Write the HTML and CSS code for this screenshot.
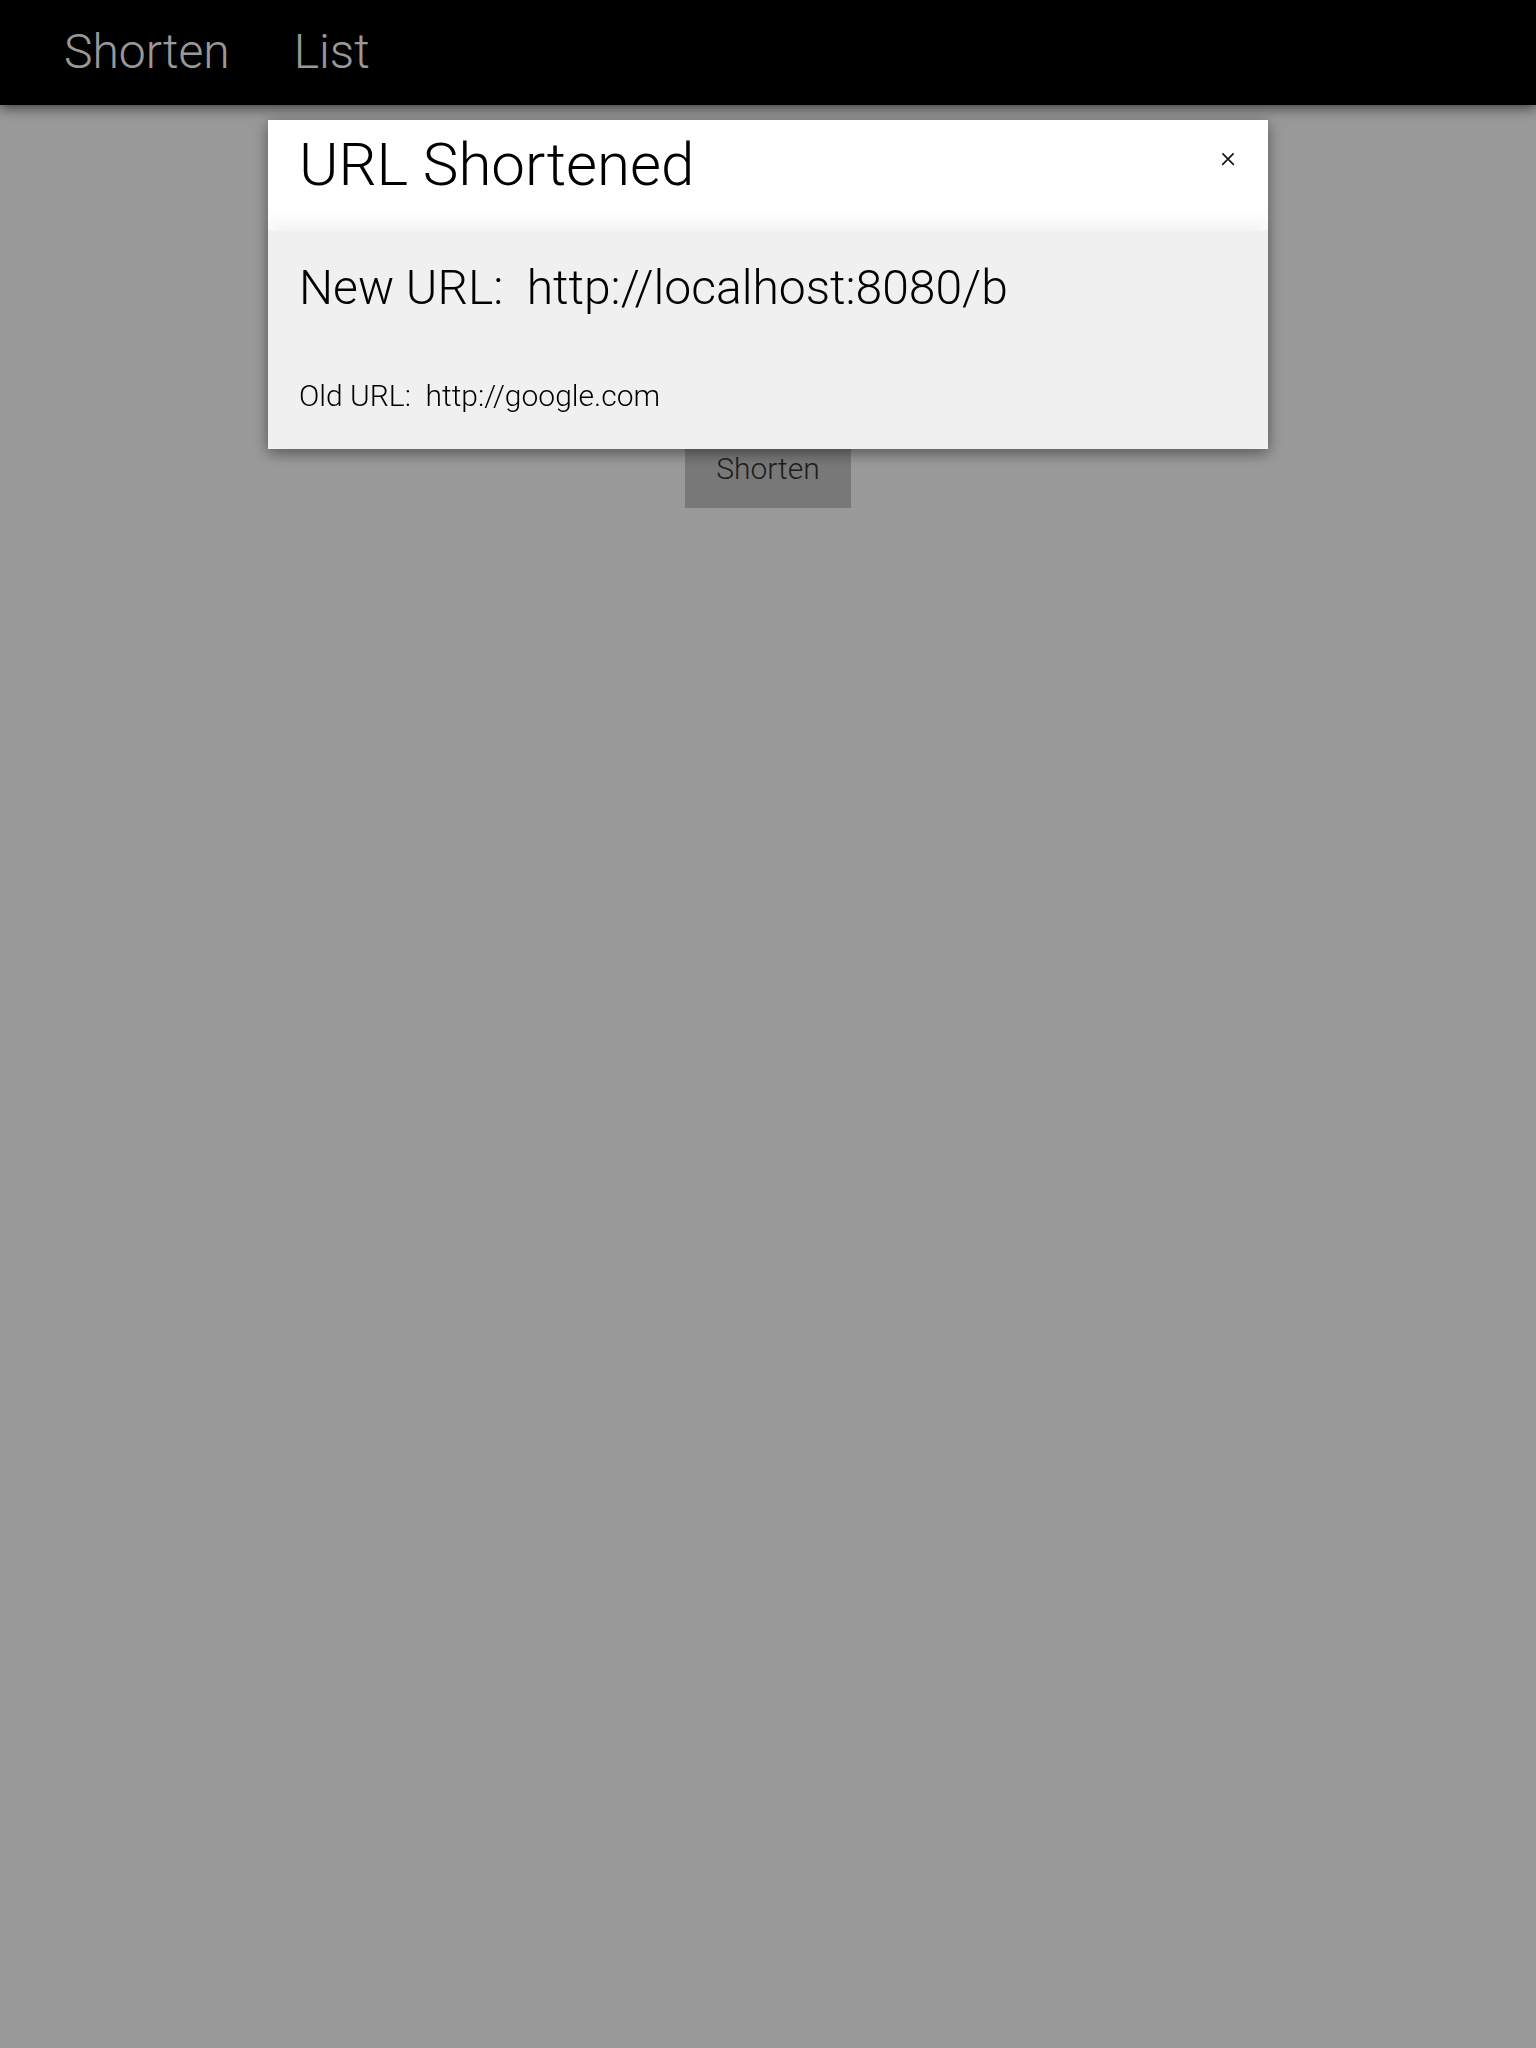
FILE: index.html
```html
<!DOCTYPE html>
<html>
<head>
<meta charset="utf-8">
<link rel="stylesheet" href="styles.css">
</head>
<body>
<nav class="navbar">
  <a class="nav-link">Shorten</a>
  <a class="nav-link">List</a>
</nav>
<main class="content">
  <form class="shorten-form">
    <input class="url-input" type="text" value="http://google.com">
    <button class="btn" type="button">Shorten</button>
  </form>
</main>
<div class="overlay">
  <div class="modal">
    <div class="modal-header">
      <h1 class="modal-title">URL Shortened</h1>
      <span class="close">×</span>
    </div>
    <div class="modal-body">
      <p class="new-url">New URL:&nbsp; http://localhost:8080/b</p>
      <p class="old-url">Old URL:&nbsp; http://google.com</p>
    </div>
  </div>
</div>
</body>
</html>
```

FILE: styles.css
```css
html, body {
  margin: 0;
  padding: 0;
  height: 100%;
}
body {
  font-family: Roboto, "Liberation Sans", sans-serif;
  font-weight: 300;
  background: #fff;
  color: #000;
}
.navbar {
  height: 105px;
  background: #000;
  display: flex;
  align-items: center;
  gap: 64px;
  padding: 0 64px;
  box-shadow: 0 3px 12px rgba(0, 0, 0, 0.6);
  position: relative;
}
.nav-link {
  color: #fff;
  font-size: 48px;
  font-weight: 300;
  line-height: 1;
  margin-top: -2px;
}
.content {
  display: flex;
  justify-content: center;
  padding-top: 241px;
}
.shorten-form {
  display: flex;
  flex-direction: column;
  align-items: center;
  gap: 20px;
}
.url-input {
  width: 600px;
  height: 60px;
  font-family: inherit;
  font-size: 30px;
  font-weight: 300;
  border: 1px solid #ccc;
  padding: 0 10px;
}
.btn {
  width: 166px;
  height: 80px;
  border: none;
  background: #c8c8c8;
  font-family: inherit;
  font-size: 30px;
  font-weight: 300;
  color: #333;
  padding: 0;
}
.overlay {
  position: fixed;
  inset: 0;
  background: rgba(0, 0, 0, 0.4);
  padding-top: 120px;
}
.modal {
  width: 1000px;
  margin: 0 auto;
  background: #f0f0f0;
  box-shadow: 0 4px 14px rgba(0, 0, 0, 0.45);
}
.modal-header {
  height: 110px;
  background: #fff;
  display: flex;
  justify-content: space-between;
  align-items: flex-start;
  padding: 0 31px;
  box-sizing: border-box;
}
.modal-title {
  margin: 10px 0 0;
  font-size: 60px;
  font-weight: 300;
  line-height: 70px;
}
.close {
  font-size: 30px;
  line-height: 1;
  margin-top: 22px;
  margin-right: 1px;
  color: #111;
}
.modal-body {
  position: relative;
  padding: 28px 31px 36px;
  border-top: 1px solid #f4f4f4;
  box-shadow: 0 -8px 14px rgba(0, 0, 0, 0.05);
}
.modal-body p {
  margin: 0;
  line-height: normal;
}
.new-url {
  font-size: 48px;
}
.old-url {
  font-size: 30px;
  margin-top: 62px !important;
}
```
